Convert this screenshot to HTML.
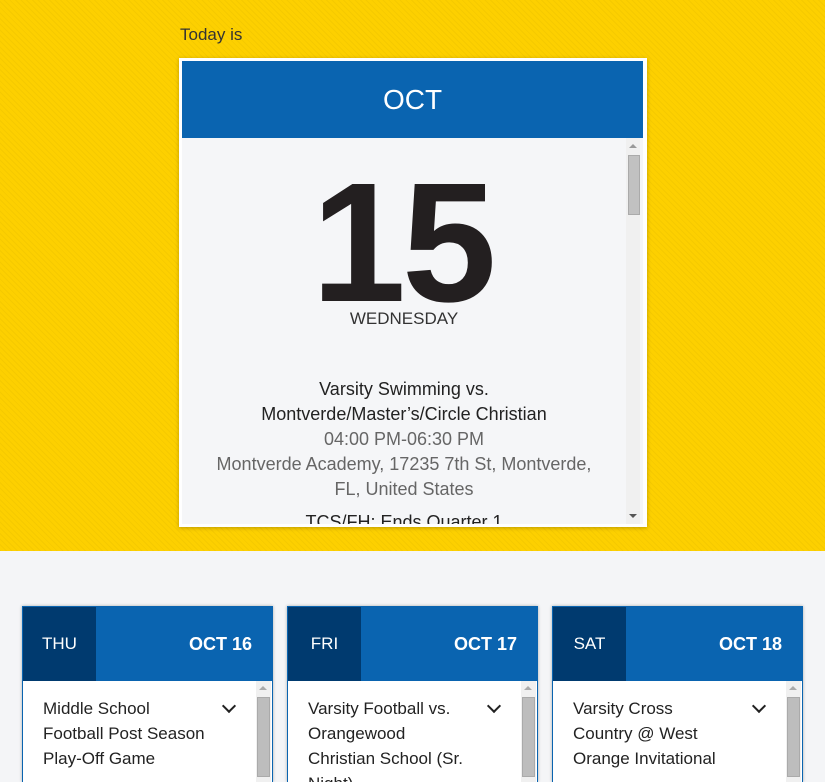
<!DOCTYPE html>
<html><head><style>
*{box-sizing:border-box;margin:0;padding:0}
html,body{width:825px;height:782px;overflow:hidden}
body{font-family:"Liberation Sans",sans-serif;background:#f4f5f7;position:relative}
.top{position:absolute;left:0;top:0;width:825px;height:551px;background:#fdd000;background-image:repeating-linear-gradient(45deg,rgba(0,0,0,0.03) 0 1px,transparent 1px 4px)}
.today{position:absolute;left:180px;top:25px;font-size:17px;color:#333;font-weight:300}
.card{position:absolute;left:179px;top:58px;width:468px;height:469px;background:#fff;box-shadow:0 1px 4px rgba(0,0,0,.25)}
.hd{position:absolute;left:3px;top:3px;width:461px;height:77px;background:#0a64b0;color:#fff;font-size:28px;text-align:center;line-height:77px;font-weight:300}
.bd{position:absolute;left:3px;top:80px;width:461px;height:386px;background:#f5f6f8;overflow:hidden}
.sb{position:absolute;right:3px;top:0;width:14px;height:386px;background:#f0f0f0}
.thumb{position:absolute;left:2px;top:17px;width:12px;height:60px;background:#c1c1c1;border:1px solid #aaa}
.ua,.da{position:absolute;left:3px;width:0;height:0;border-left:4px solid transparent;border-right:4px solid transparent}
.ua{top:6px;border-bottom:4px solid #999}.da{bottom:6px;border-top:4px solid #555}
.num{position:absolute;left:0;width:444px;top:30px;text-align:center;font-size:170px;font-weight:bold;line-height:150px;color:#231f20;letter-spacing:-4px;text-indent:-4px}
.wd{position:absolute;left:0;width:444px;top:171px;text-align:center;font-size:17px;color:#333;font-weight:300}
.ev{position:absolute;left:0;width:444px;top:239px;text-align:center;font-size:18px;line-height:25px;color:#222}
.ev .g{color:#666}
.sm{position:absolute;top:606px;width:251px;height:176px;background:#fff;box-shadow:0 0 3px rgba(0,0,0,.3);border:1px solid #0a64b0;border-bottom:none;overflow:hidden}
.sm .h{height:74px;background:#0a64b0;color:#fff;position:relative}
.sm .d{position:absolute;left:0;top:0;width:73px;height:74px;background:#003a6f;text-align:center;line-height:74px;font-size:17px}
.sm .o{position:absolute;right:20px;top:0;line-height:74px;font-size:18px;font-weight:bold}
.sm .t{position:absolute;left:20px;top:89px;font-size:17px;line-height:25px;color:#222;width:166px}
.sm .c{position:absolute;left:201px;top:94px;width:10px;height:10px;border-right:2px solid #222;border-bottom:2px solid #222;transform:rotate(45deg)}
.sm .s{position:absolute;right:1px;top:74px;width:15px;height:102px;background:#f0f0f0}
.sm .s i{position:absolute;left:1px;top:16px;width:13px;height:80px;background:#bdbdbd;border:1px solid #aaa}
.sm .s b{position:absolute;left:3px;top:5px;width:0;height:0;border-left:4px solid transparent;border-right:4px solid transparent;border-bottom:4px solid #aaa}
</style></head><body>
<div class="top">
<div class="today">Today is</div>
<div class="card">
<div class="hd">OCT</div>
<div class="bd">
<div class="num">15</div>
<div class="wd">WEDNESDAY</div>
<div class="ev">Varsity Swimming vs.<br>Montverde/Master’s/Circle Christian<br><span class="g">04:00 PM-06:30 PM<br>Montverde Academy, 17235 7th St, Montverde,<br>FL, United States</span><div style="margin-top:8px">TCS/FH: Ends Quarter 1</div></div>
<div class="sb"><div class="ua"></div><div class="thumb"></div><div class="da"></div></div>
</div>
</div>
</div>
<div class="sm" style="left:22px"><div class="h"><div class="d">THU</div><div class="o">OCT 16</div></div><div class="t">Middle School Football Post Season Play-Off Game</div><div class="c"></div><div class="s"><b></b><i></i></div></div>
<div class="sm" style="left:287px"><div class="h"><div class="d">FRI</div><div class="o">OCT 17</div></div><div class="t">Varsity Football vs. Orangewood Christian School (Sr. Night)</div><div class="c"></div><div class="s"><b></b><i></i></div></div>
<div class="sm" style="left:552px"><div class="h"><div class="d">SAT</div><div class="o">OCT 18</div></div><div class="t" style="width:150px">Varsity Cross Country @ West Orange Invitational</div><div class="c"></div><div class="s"><b></b><i></i></div></div>
</body></html>
